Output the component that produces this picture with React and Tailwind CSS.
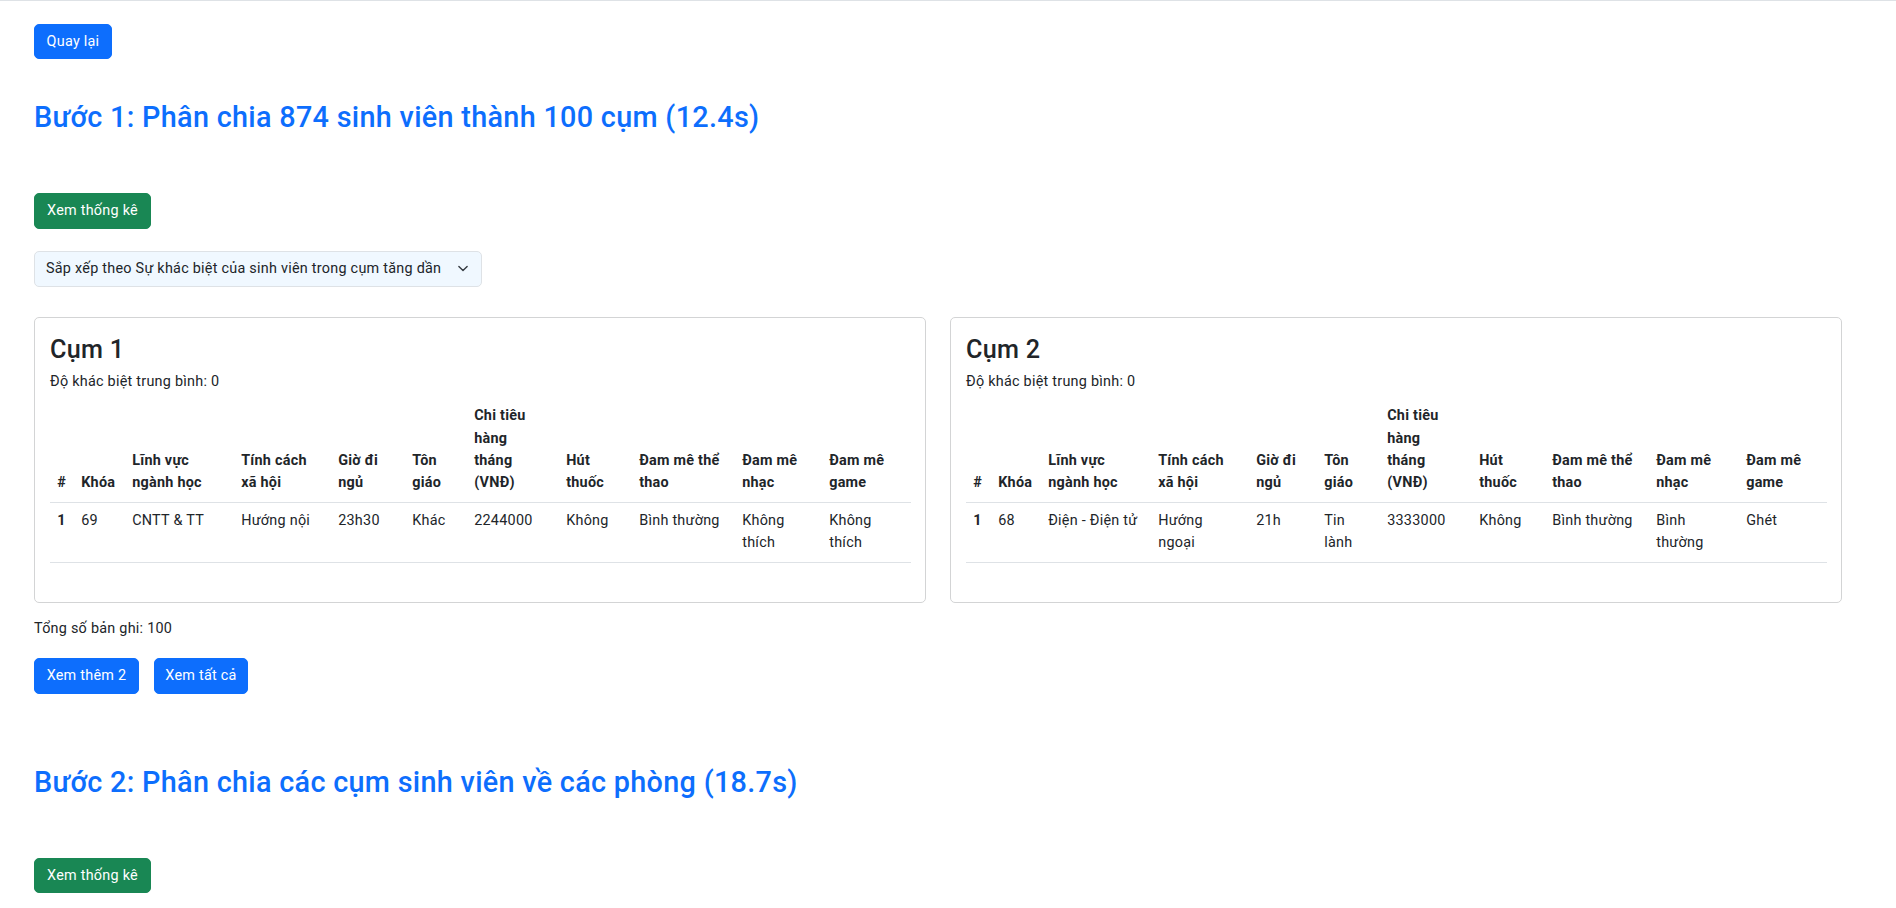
import React from "react";

const clusters = [
  {
    name: "Cụm 1",
    diff: 0,
    cols: ["w-[24px]", "w-[51px]", "w-[109px]", "w-[97px]", "w-[74px]", "w-[62px]", "w-[92px]", "w-[73px]", "w-[103px]", "w-[87px]", "w-[89px]"],
    row: ["69", "CNTT & TT", "Hướng nội", "23h30", "Khác", "2244000", "Không", "Bình thường", "Không\nthích", "Không\nthích"],
  },
  {
    name: "Cụm 2",
    diff: 0,
    cols: ["w-[25px]", "w-[50px]", "w-[110px]", "w-[98px]", "w-[68px]", "w-[63px]", "w-[92px]", "w-[73px]", "w-[104px]", "w-[90px]", "w-[88px]"],
    row: ["68", "Điện - Điện tử", "Hướng\nngoại", "21h", "Tin\nlành", "3333000", "Không", "Bình thường", "Bình\nthường", "Ghét"],
  },
];

const headers = [
  "#",
  "Khóa",
  "Lĩnh vực\nngành học",
  "Tính cách\nxã hội",
  "Giờ đi\nngủ",
  "Tôn\ngiáo",
  "Chi tiêu\nhàng\ntháng\n(VNĐ)",
  "Hút\nthuốc",
  "Đam mê thể\nthao",
  "Đam mê\nnhạc",
  "Đam mê\ngame",
];

function Btn({ children, color = "blue", className = "" }) {
  const bg = color === "green" ? "bg-[#198754] border-[#198754]" : "bg-[#0d6efd] border-[#0d6efd]";
  return (
    <button className={`${bg} ${className} border text-white text-[14.4px] leading-[21.6px] h-[35px] rounded-[5px] flex items-center justify-center`}>
      {children}
    </button>
  );
}

function ClusterCard({ cluster }) {
  return (
    <div className="border border-[#d3d4d5] rounded-[5px] px-[15px] pt-[17px] pb-[15px]">
      <h3 className="text-[25.2px] leading-[30px] font-medium text-[#212529] tracking-[0.3px]">{cluster.name}</h3>
      <p className="mt-[6px] leading-[21.6px]">Độ khác biệt trung bình: {cluster.diff}</p>
      <table className="table-fixed w-full mt-[6px] mb-[24px] border-collapse leading-[22.3px]">
        <colgroup>
          {cluster.cols.map((c, i) => (
            <col key={i} className={c} />
          ))}
        </colgroup>
        <thead>
          <tr className="border-b border-[#dee2e6]">
            {headers.map((h, i) => (
              <th key={i} className="p-[7.2px] text-left align-bottom font-bold whitespace-pre-line">
                {h}
              </th>
            ))}
          </tr>
        </thead>
        <tbody>
          <tr className="border-b border-[#dee2e6]">
            <th className="p-[7.2px] text-left align-top font-bold">1</th>
            {cluster.row.map((v, i) => (
              <td key={i} className="p-[7.2px] align-top whitespace-pre-line">
                {v}
              </td>
            ))}
          </tr>
        </tbody>
      </table>
    </div>
  );
}

export default function App() {
  return (
    <div className="min-h-screen bg-white border-t border-[#dee2e6] text-[#212529] text-[14.4px] leading-[21.6px] tracking-[0.25px] font-['Segoe_UI',Roboto,'Liberation_Sans',sans-serif]">
      <div className="pl-[34px] pr-[54px] pt-[23px] pb-[15px]">
        <Btn className="w-[78px]">Quay lại</Btn>

        <h2 className="mt-[41px] text-[28.8px] leading-[34.56px] font-medium text-[#0d6efd] tracking-[0.3px]">
          Bước 1: Phân chia 874 sinh viên thành 100 cụm (12.4s)
        </h2>

        <Btn color="green" className="mt-[58px] w-[117px] h-[36px]">Xem thống kê</Btn>

        <div className="mt-[22px] w-[448px] h-[36px] bg-[#f0f8ff] border border-[#dee2e6] rounded-[5px] pl-[11px] pr-[11px] flex items-center justify-between">
          <span>Sắp xếp theo Sự khác biệt của sinh viên trong cụm tăng dần</span>
          <svg width="14" height="11" viewBox="0 0 16 16" fill="none" stroke="#343a40" strokeWidth="2" strokeLinecap="round" strokeLinejoin="round">
            <path d="m2 5 6 6 6-6" />
          </svg>
        </div>

        <div className="mt-[30px] grid grid-cols-2 gap-[24px]">
          {clusters.map((c) => (
            <ClusterCard key={c.name} cluster={c} />
          ))}
        </div>

        <p className="mt-[15px]">Tổng số bản ghi: 100</p>

        <div className="mt-[19px] flex gap-[15px]">
          <Btn className="w-[105px] h-[36px]">Xem thêm 2</Btn>
          <Btn className="w-[94px] h-[36px]">Xem tất cả</Btn>
        </div>

        <h2 className="mt-[71px] text-[28.8px] leading-[34.56px] font-medium text-[#0d6efd] tracking-[0.3px]">
          Bước 2: Phân chia các cụm sinh viên về các phòng (18.7s)
        </h2>

        <Btn color="green" className="mt-[58px] w-[117px]">Xem thống kê</Btn>
      </div>
    </div>
  );
}
